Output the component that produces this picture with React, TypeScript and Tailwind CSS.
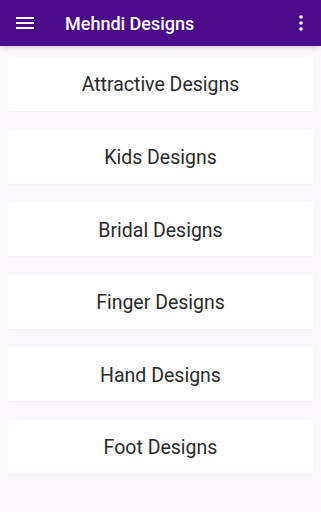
const items = [
  'Attractive Designs',
  'Kids Designs',
  'Bridal Designs',
  'Finger Designs',
  'Hand Designs',
  'Foot Designs',
];

const App = () => {
  return (
    <div
      className="flex h-[512px] w-full flex-col bg-[#faf8fc]"
      style={{ fontFamily: 'Roboto, "Noto Sans", sans-serif' }}
    >
      <header className="flex h-[46px] shrink-0 items-center bg-[#4b0a89] px-4 shadow-md">
        <svg width="18" height="14" viewBox="0 0 18 14" className="shrink-0">
          <rect x="0" y="1" width="18" height="2" fill="white" />
          <rect x="0" y="6" width="18" height="2" fill="white" />
          <rect x="0" y="11" width="18" height="2" fill="white" />
        </svg>
        <h1 className="ml-[31px] flex-1 text-[18px] font-medium text-white">
          Mehndi Designs
        </h1>
        <svg width="4" height="16" viewBox="0 0 4 16" className="mr-[2px]">
          <circle cx="2" cy="2" r="1.8" fill="white" />
          <circle cx="2" cy="8" r="1.8" fill="white" />
          <circle cx="2" cy="14" r="1.8" fill="white" />
        </svg>
      </header>
      <div className="flex flex-col gap-[18.6px] px-[8px] pt-[11px]">
        {items.map((item) => (
          <div
            key={item}
            className="flex h-[54px] items-center justify-center rounded-[2px] bg-white pt-[2px] text-[19.5px] font-normal text-[#2a2a2a] shadow-[0_1px_2px_rgba(0,0,0,0.04)]"
          >
            {item}
          </div>
        ))}
      </div>
    </div>
  );
};

export default App;
